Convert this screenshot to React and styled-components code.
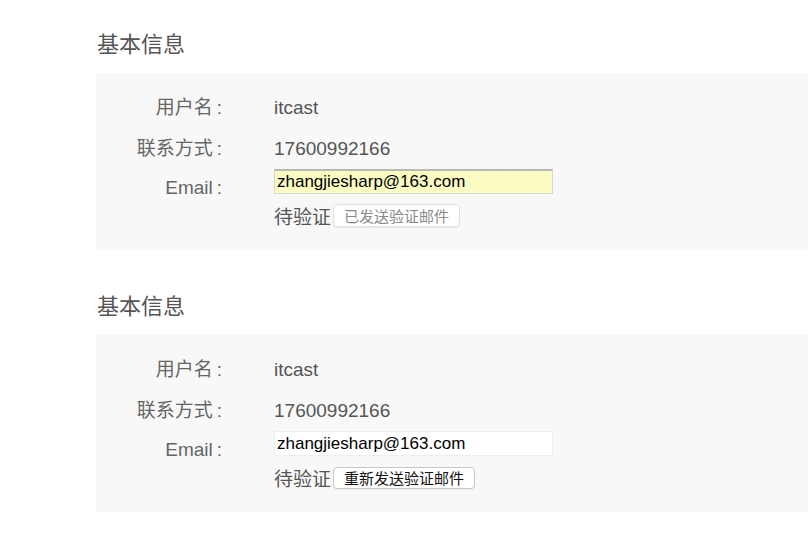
import React from "react";
import styled, { createGlobalStyle } from "styled-components";

const GlobalStyle = createGlobalStyle`
  html, body {
    margin: 0;
    padding: 0;
    background: #ffffff;
  }
  body {
    font-family: "Liberation Sans", "Noto Sans CJK SC", sans-serif;
    overflow: hidden;
  }
`;

const Page = styled.div`
  padding: 30px 0 0 96px;
  width: 808px;
  box-sizing: border-box;
`;

const Section = styled.section`
  margin-bottom: 42px;
`;

const Heading = styled.h3`
  margin: 0 0 13px;
  font-size: 22px;
  line-height: 30px;
  font-weight: normal;
  color: #555555;
  padding-left: 1px;
`;

const Panel = styled.div`
  background: #f8f8f8;
  padding: 14px 0 23px;
  height: 177px;
  box-sizing: border-box;
`;

const Row = styled.div`
  display: flex;
  align-items: ${({ $top }) => ($top ? "flex-start" : "center")};
  min-height: 41px;
`;

const Label = styled.div`
  width: 126px;
  flex: none;
  text-align: right;
  font-size: 19px;
  line-height: ${({ $tall }) => ($tall ? "38px" : "41px")};
  color: #666666;
`;

const Colon = styled.span`
  margin-left: 4px;
`;

const Value = styled.div`
  margin-left: 52px;
  font-size: 19px;
  color: #555555;
`;

const EmailCol = styled.div`
  margin-left: 52px;
  display: flex;
  flex-direction: column;
  gap: 10px;
`;

const EmailInput = styled.input`
  width: 279px;
  height: 25px;
  box-sizing: border-box;
  margin: 0;
  padding: 0 2px;
  font-family: "Liberation Sans", sans-serif;
  font-size: 17px;
  color: #000000;
  outline: none;
  background: ${({ $filled }) => ($filled ? "#fafcc2" : "#ffffff")};
  border: 1px solid ${({ $filled }) => ($filled ? "#d6d6d6" : "#eeeeee")};
  border-top: ${({ $filled }) => ($filled ? "2px solid #b9b9b9" : "1px solid #eeeeee")};
`;

const Status = styled.div`
  display: flex;
  align-items: center;
  height: 23px;
`;

const StatusText = styled.span`
  font-size: 19px;
  color: #555555;
  margin-right: 2px;
`;

const MailButton = styled.button`
  height: ${({ disabled }) => (disabled ? "23px" : "22px")};
  padding: 0 10px;
  margin: 0;
  font-family: "Noto Sans CJK SC", sans-serif;
  font-size: 15px;
  line-height: 1;
  background: #ffffff;
  color: ${({ disabled }) => (disabled ? "#8a8a8a" : "#111111")};
  border: 1px solid ${({ disabled }) => (disabled ? "#e2e2e2" : "#c8c8c8")};
  border-radius: 4px;
  box-shadow: 0 1px 1px rgba(0, 0, 0, 0.06);
  cursor: ${({ disabled }) => (disabled ? "default" : "pointer")};
`;

const InfoBlock = ({ sent }) => (
  <Section>
    <Heading>基本信息</Heading>
    <Panel>
      <Row>
        <Label>用户名<Colon>:</Colon></Label>
        <Value>itcast</Value>
      </Row>
      <Row>
        <Label>联系方式<Colon>:</Colon></Label>
        <Value>17600992166</Value>
      </Row>
      <Row $top>
        <Label $tall>Email<Colon>:</Colon></Label>
        <EmailCol>
          <EmailInput $filled={sent} defaultValue="zhangjiesharp@163.com" />
          <Status>
            <StatusText>待验证</StatusText>
            {sent ? (
              <MailButton disabled>已发送验证邮件</MailButton>
            ) : (
              <MailButton>重新发送验证邮件</MailButton>
            )}
          </Status>
        </EmailCol>
      </Row>
    </Panel>
  </Section>
);

const App = () => (
  <>
    <GlobalStyle />
    <Page>
      <InfoBlock sent />
      <InfoBlock />
    </Page>
  </>
);

export default App;
